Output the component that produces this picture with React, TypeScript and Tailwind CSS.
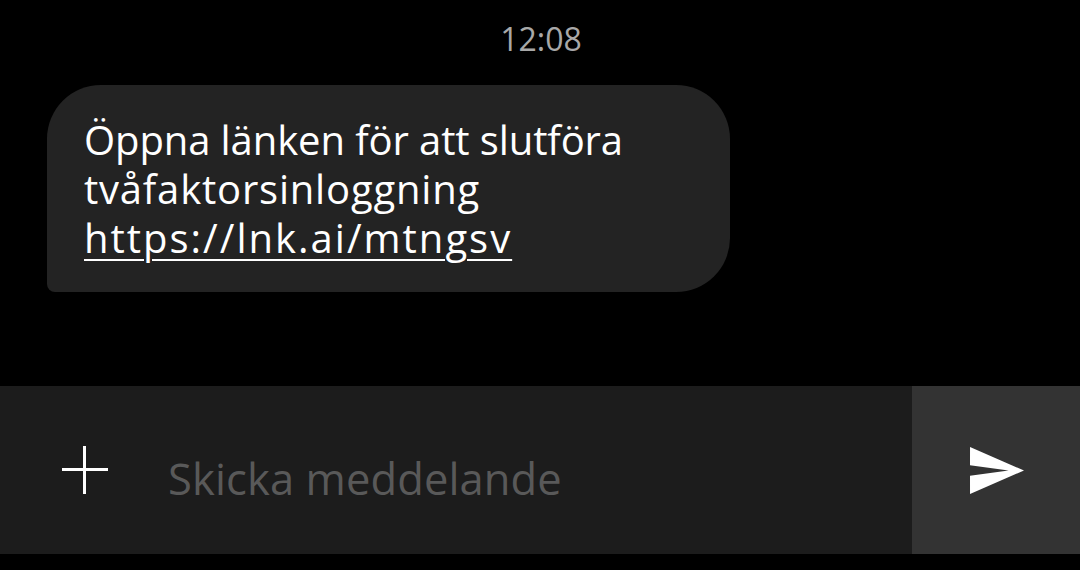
export default function App() {
  return (
    <div className="w-[1080px] h-[570px] bg-black flex flex-col overflow-hidden" style={{ fontFamily: '"Open Sans", "Noto Sans", sans-serif' }}>
      <div className="h-[85px] flex justify-center pt-[23px]">
        <span className="text-[32px] leading-none text-[#a8a8a8] ml-[2px] h-[32px]">12:08</span>
      </div>
      <div className="pl-[47px] h-[301px]">
        <div className="w-[683px] h-[207px] bg-[#232323] rounded-[54px] rounded-bl-[8px] pl-[37px] pt-[30px]">
          <div className="text-[40px] leading-[49px] text-white flex flex-col items-start">
            <span className="tracking-[-0.1px]">Öppna länken för att slutföra</span>
            <span className="tracking-[0.8px]">tvåfaktorsinloggning</span>
            <span className="tracking-[2px] underline underline-offset-[6px] decoration-[2px]">https://lnk.ai/mtngsv</span>
          </div>
        </div>
      </div>
      <div className="h-[168px] flex bg-[#1c1c1c]">
        <div className="flex-1 flex items-center">
          <div className="w-[168px] flex items-center pl-[62px]">
            <svg width="46" height="48" viewBox="0 0 46 48">
              <path d="M22.5 0V48M0 23.5H46" stroke="white" strokeWidth="3" />
            </svg>
          </div>
          <span className="text-[43.5px] leading-none text-[#595959] tracking-[0.1px] mt-[18px]">Skicka meddelande</span>
        </div>
        <div className="w-[168px] bg-[#333333] flex items-center justify-center">
          <svg width="54" height="47" viewBox="2 3 21 18" preserveAspectRatio="none" className="ml-[2px]">
            <path d="M2.01 21L23 12 2.01 3 2 10l15 2-15 2z" fill="white" />
          </svg>
        </div>
      </div>
    </div>
  );
}
